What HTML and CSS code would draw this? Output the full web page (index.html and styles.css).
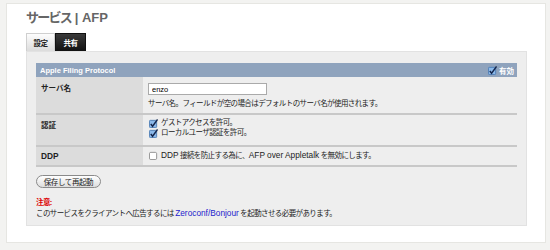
FILE: index.html
```html
<!DOCTYPE html>
<html lang="ja">
<head>
  <meta charset="UTF-8">
  <title>サービス | AFP</title>
  <link rel="stylesheet" href="styles.css">
</head>
<body>
  <div class="page">
    <h1 class="title"><span class="jp">サービス</span> | AFP</h1>

    <div class="tabs">
      <span class="tab">設定</span>
      <span class="tab active">共有</span>
    </div>

    <div class="box">
      <table class="settings">
        <tr class="head">
          <th colspan="2">
            <div class="head-row">
              <span>Apple Filing Protocol</span>
              <span class="enable">
                <svg class="cb" viewBox="0 0 10 10" width="9" height="9"><rect x="0.5" y="1.5" width="8" height="8" rx="1" fill="#8bb9ea" stroke="#4d7cb3"/><path d="M2 5.5 L4 8 L9.5 0.5" fill="none" stroke="#14264d" stroke-width="1.6"/></svg>
                有効
              </span>
            </div>
          </th>
        </tr>
        <tr class="row-name">
          <td class="label">サーバ名</td>
          <td class="value">
            <input class="text" type="text" value="enzo">
            <div class="hint">サーバ名。フィールドが空の場合はデフォルトのサーバ名が使用されます。</div>
          </td>
        </tr>
        <tr class="row-auth">
          <td class="label">認証</td>
          <td class="value">
            <div class="check">
              <svg class="cb" viewBox="0 0 10 10" width="9" height="9"><rect x="0.5" y="1.5" width="8" height="8" rx="1" fill="#8bb9ea" stroke="#4d7cb3"/><path d="M2 5.5 L4 8 L9.5 0.5" fill="none" stroke="#14264d" stroke-width="1.6"/></svg>
              ゲストアクセスを許可。
            </div>
            <div class="check">
              <svg class="cb" viewBox="0 0 10 10" width="9" height="9"><rect x="0.5" y="1.5" width="8" height="8" rx="1" fill="#8bb9ea" stroke="#4d7cb3"/><path d="M2 5.5 L4 8 L9.5 0.5" fill="none" stroke="#14264d" stroke-width="1.6"/></svg>
              ローカルユーザ認証を許可。
            </div>
          </td>
        </tr>
        <tr class="row-ddp">
          <td class="label"><span class="en">DDP</span></td>
          <td class="value">
            <div class="check">
              <svg class="cb" viewBox="0 0 10 10" width="9" height="9"><rect x="0.5" y="1.5" width="8" height="8" rx="1.5" fill="#fff" stroke="#8a8a8a"/></svg>
              <span><span class="en">DDP</span> 接続を防止する為に、<span class="en">AFP over Appletalk</span> を無効にします。</span>
            </div>
          </td>
        </tr>
      </table>

      <button class="btn" type="button">保存して再起動</button>

      <p class="note">
        <span class="warn">注意:</span><br>
        このサービスをクライアントへ広告するには <a class="en" href="#">Zeroconf/Bonjour</a> を起動させる必要があります。
      </p>
    </div>
  </div>
</body>
</html>
```

FILE: styles.css
```css
body {
  margin: 0;
  padding: 3px 4px 7px 6px;
  background-color: #f3f3f1;
  font-family: "Liberation Sans", "Noto Sans CJK JP", sans-serif;
  font-size: 7.5px;
  color: #222;
}

.page {
  background-color: #fff;
  border: 1px solid #e6e6e2;
  padding: 4px 18px 0 19px;
  box-sizing: border-box;
  height: 240px;
}

.title {
  margin: 0 0 6px 0;
  font-size: 13px;
  font-weight: bold;
  color: #666;
  line-height: 19px;
}

.title .jp {
  letter-spacing: -1.75px;
}

.tabs {
  display: flex;
  height: 18px;
}

.tab {
  display: flex;
  align-items: center;
  justify-content: center;
  font-weight: bold;
  font-size: 7.5px;
  letter-spacing: -0.5px;
  color: #222;
  background: linear-gradient(#fdfdfd, #dcdcdc);
  border: 1px solid #cfcfcf;
  border-bottom: none;
  width: 27px;
}

.tab.active {
  width: 29px;
  background: linear-gradient(#3a3a3a, #111);
  border-color: #111;
  color: #fff;
}

.box {
  background-color: #eee;
  border: 1px solid #e2e2e2;
  padding: 11px 9px 6px 9px;
}

.settings {
  width: 100%;
  border-collapse: collapse;
}

.head th {
  background-color: #8fa3bd;
  color: #fff;
  font-weight: bold;
  text-align: left;
  height: 14px;
  padding: 0 3px 0 4px;
}

.head-row {
  display: flex;
  justify-content: space-between;
  align-items: center;
}

.enable {
  display: flex;
  align-items: center;
  gap: 2px;
}

.settings td {
  border-bottom: 2px solid #c8c8c8;
  vertical-align: top;
}

.label {
  width: 98px;
  background-color: #dcdcdc;
  font-weight: bold;
  padding: 5px 4px 0 5px;
}

.value {
  padding: 5px 4px 4px 5px;
}

.row-name td {
  height: 24px;
}

.row-auth td {
  height: 26px;
}

.row-auth .label {
  padding-top: 4px;
}

.row-auth .value {
  padding: 3px 4px 0 5px;
}

.row-ddp td {
  height: 14px;
}

.row-ddp .label {
  padding-top: 4px;
}

.row-ddp .value {
  padding: 3px 4px 0 5px;
}

.en {
  font-size: 8.3px;
  letter-spacing: 0;
}

.text {
  display: block;
  width: 119px;
  height: 12px;
  box-sizing: border-box;
  border: 1px solid #aaa;
  padding: 0 3px;
  font-family: "Liberation Sans", sans-serif;
  font-size: 7.5px;
  margin: 1px 0 4px 0;
}

.hint,
.check {
  letter-spacing: -0.6px;
  line-height: 10px;
}

.check {
  display: flex;
  align-items: center;
  gap: 3px;
  padding-left: 1px;
}

.cb {
  flex: none;
}

.btn {
  margin-top: 8px;
  height: 13px;
  width: 65px;
  padding: 0;
  border: 1px solid #8a8a8a;
  border-radius: 7px;
  background: linear-gradient(#fff, #ddd);
  font-family: "Liberation Sans", "Noto Sans CJK JP", sans-serif;
  font-size: 7.5px;
  letter-spacing: -0.4px;
  color: #222;
}

.note {
  margin: 9px 0 0 0;
  line-height: 11px;
  letter-spacing: -0.6px;
}

.warn {
  color: #d00;
  font-weight: bold;
}

.note a {
  color: #2222cc;
  text-decoration: none;
}
```
